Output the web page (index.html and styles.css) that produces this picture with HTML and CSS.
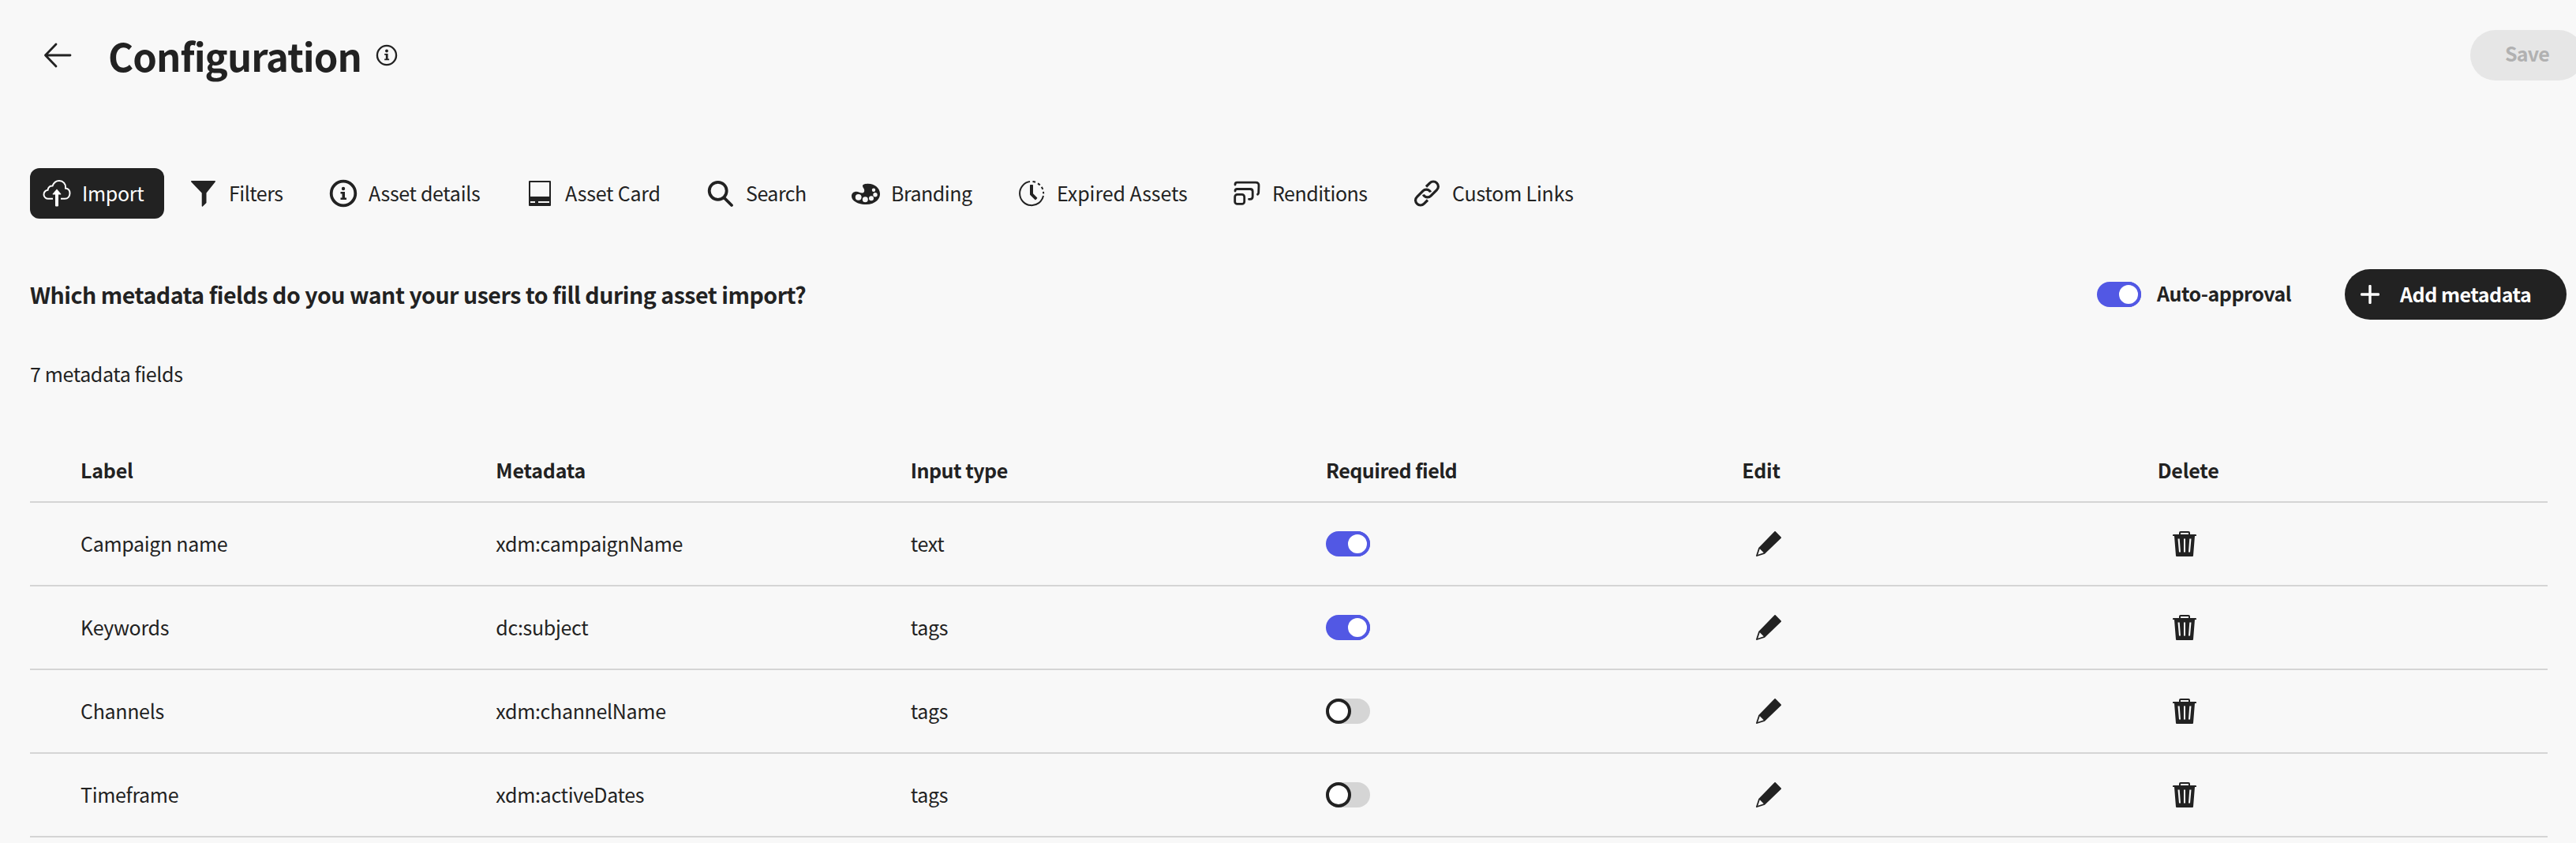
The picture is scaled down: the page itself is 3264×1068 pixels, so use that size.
FILE: index.html
```
<!DOCTYPE html>
<html lang="en">
<head>
<meta charset="utf-8">
<title>Configuration</title>
<link rel="stylesheet" href="styles.css">
</head>
<body>
<svg class="defs" width="0" height="0">
  <symbol id="pencil" viewBox="0 0 36 36">
    <path fill-rule="evenodd" d="M26.700 2.200 33.800 9.500c.4.400.4.900 0 1.300L13 30.800 2.800 33.900c-.5.100-.9-.3-.8-.8L5.300 23 25.500 2.200c.3-.4.900-.4 1.200 0zM6.800 24.300 4.300 31.700l7.500-2.400z"/>
  </symbol>
  <symbol id="trash" viewBox="0 0 36 36">
    <path fill-rule="evenodd" d="M11 6V4a2 2 0 0 1 2-2h10a2 2 0 0 1 2 2v2h7a1 1 0 0 1 1 1v1h-2l-2 25a1 1 0 0 1-1 1H8a1 1 0 0 1-1-1L5 8H3V7a1 1 0 0 1 1-1zm2 0h10V4H13zM9.500 11.500 11 28.500h2l-1.300-17zM17 11.500v17h2v-17zm7.300 0L23 28.500h2l1.500-17z"/>
  </symbol>
</svg>
<main class="page">
  <header class="topbar">
    <svg class="back" viewBox="0 0 36 36"><path d="M34 18H2.500M16 4 2.500 18 16 32"/></svg>
    <h1 class="title">Configuration</h1>
    <svg class="hint" viewBox="0 0 36 36"><circle class="ring" cx="18" cy="18" r="15.500"/><circle cx="18" cy="11" r="2.500"/><path d="M14.300 15.500H20v8.200h2v2.300h-7.700v-2.300h2.200v-5.900h-2.200z"/></svg>
    <button class="btn btn-save" disabled>Save</button>
  </header>

  <nav class="tabs">
    <a class="tab active"><svg viewBox="0 0 36 36"><path class="line" d="M13 24.800H7.500a5.500 5.500 0 0 1-1-11c.3-3.500 3-5.600 6-5.300C14 4.800 17 2 21 2c5 0 8.500 4 8 8.500v1c3.500.4 5.500 3 5.500 6.300 0 4-2.500 7-6.500 7h-5"/><path class="fill" d="M18 12.500l5.200 6c.4.500.1 1-.5 1H20v14a1 1 0 0 1-1 1h-2a1 1 0 0 1-1-1v-14h-2.700c-.6 0-.9-.5-.5-1z"/></svg><span>Import</span></a>
    <a class="tab tight"><svg viewBox="0 0 36 36"><path class="fill" d="M3 2h29c1 0 1.300.8.700 1.500L21.500 17.500V30l-4.600 4.500c-.4.400-1.200.1-1.200-.6V17.500L2.300 3.500C1.700 2.800 2 2 3 2z"/></svg><span>Filters</span></a>
    <a class="tab"><svg viewBox="0 0 36 36"><circle class="bold" cx="18" cy="18" r="15.300"/><circle class="fill" cx="18" cy="12" r="2.200"/><path class="fill" d="M14.500 16H20v7.500h2V26h-7.500v-2.500h2v-5h-2z"/></svg><span>Asset details</span></a>
    <a class="tab loose"><svg viewBox="0 0 36 36"><path class="fill" fill-rule="evenodd" d="M5 2h26a1 1 0 0 1 1 1v30a1 1 0 0 1-1 1H5a1 1 0 0 1-1-1V3a1 1 0 0 1 1-1zm1 2v18h24V4zm0 24v2h6v-2zm10 0v2h14v-2z"/></svg><span>Asset Card</span></a>
    <a class="tab tight"><svg viewBox="0 0 36 36"><circle class="bold" cx="14.700" cy="14.800" r="11"/><path class="bold round" d="m23 24 9 9"/></svg><span>Search</span></a>
    <a class="tab tight"><svg viewBox="0 0 36 36"><path class="fill" fill-rule="evenodd" d="M14 8.500c0-2 3-2.800 7-2.800 8.500 0 15 5.800 15 12.800C36 26.500 28.500 32 18.500 32 8 32 0 27.500 0 21.500c0-3.700 2.800-5.800 6-5.800 3 0 4.800 1.800 7.500 1.800 2 0 2.700-1.500 2.700-3.500S14 10.500 14 8.500zM8.700 18.900a3.900 3.900 0 1 0 .01 7.800 3.900 3.900 0 0 0-.01-7.800zM17.300 22.300a3.500 3.500 0 1 0 .01 7 3.500 3.500 0 0 0-.01-7zM25 21.200a3 3 0 1 0 .01 6 3 3 0 0 0-.01-6zM30 17a2.700 2.700 0 1 0 .01 5.400A2.700 2.700 0 0 0 30 17zM28 11.500a2.200 2.200 0 1 0 .01 4.400 2.200 2.200 0 0 0-.01-4.400z"/></svg><span>Branding</span></a>
    <a class="tab looser"><svg viewBox="0 0 36 36"><path class="line" d="M16 3.100A15.100 15.100 0 1 0 33 21"/><path class="line" d="M19.500 3a15 15 0 0 1 3.500.8M26 5.300a15 15 0 0 1 2.700 2.200M30.700 9.900a15 15 0 0 1 1.600 3M33 15.800a15 15 0 0 1 .1 2.600"/><path class="fill" d="M16.800 7h2.400c.5 0 .8.300.8.800v10.400l5 5c.4.400.4.800 0 1.200l-1.500 1.500c-.4.400-.8.400-1.200 0l-6-6c-.2-.2-.3-.5-.3-.8V7.800c0-.5.3-.8.800-.8z"/></svg><span>Expired Assets</span></a>
    <a class="tab tight"><svg viewBox="0 0 36 36"><path class="mid" d="M3 7c0-2 1-2.800 2.500-2.800H29c3 0 4.200 1.300 4 3.800l-.3 9c0 1-.4 1.800-1.200 2.300M3 15c0-1.700 1-2.500 2.500-2.500H22c2.200 0 3.200 1 3.200 3V22c0 2.300-1 3.300-3.200 3.300h-1.500"/><rect class="mid" x="2.700" y="19.400" width="12" height="12" rx="3"/></svg><span>Renditions</span></a>
    <a class="tab loose"><svg viewBox="0 0 36 36"><path class="mid thick" d="m17 9.500 4.700-4.600a6 6 0 0 1 8.800 0 6 6 0 0 1 0 8.800l-7.500 7.500a6 6 0 0 1-8.500 0 4 4 0 0 1-.9-1.700M19 26.500l-4.700 4.600a6 6 0 0 1-8.800 0 6 6 0 0 1 0-8.800l7.500-7.500a6 6 0 0 1 8.500 0 4 4 0 0 1 .9 1.700"/></svg><span>Custom Links</span></a>
  </nav>

  <section class="toolbar">
    <h2 class="question">Which metadata fields do you want your users to fill during asset import?</h2>
    <div class="approval"><span class="switch on"></span><span class="approval-label">Auto-approval</span></div>
    <button class="btn btn-add"><svg viewBox="0 0 24 24"><path d="M12 1.500v21M1.500 12h21"/></svg><span>Add metadata</span></button>
  </section>

  <p class="count">7 metadata fields</p>

  <section class="table">
    <div class="row head"><span>Label</span><span>Metadata</span><span class="tight">Input type</span><span class="tight">Required field</span><span>Edit</span><span>Delete</span></div>
    <div class="row"><span>Campaign name</span><span>xdm:campaignName</span><span>text</span><i class="switch on"></i><svg><use href="#pencil"/></svg><svg><use href="#trash"/></svg></div>
    <div class="row"><span>Keywords</span><span>dc:subject</span><span>tags</span><i class="switch on"></i><svg><use href="#pencil"/></svg><svg><use href="#trash"/></svg></div>
    <div class="row"><span>Channels</span><span>xdm:channelName</span><span>tags</span><i class="switch"></i><svg><use href="#pencil"/></svg><svg><use href="#trash"/></svg></div>
    <div class="row"><span>Timeframe</span><span>xdm:activeDates</span><span>tags</span><i class="switch"></i><svg><use href="#pencil"/></svg><svg><use href="#trash"/></svg></div>
  </section>
</main>
</body>
</html>
```
FILE: styles.css
```
*, *::before { box-sizing: border-box; }

body {
  margin: 0;
  background: #f8f8f8;
  color: #222;
  font: 25px/32px "Noto Sans CJK SC", "Open Sans", sans-serif;
  letter-spacing: -0.32px;
  overflow: hidden;
}

h1, h2, p { margin: 0; }
.defs { display: block; }

.page {
  display: flex;
  flex-direction: column;
  width: 3274px;
  padding: 38px 0 0 38px;
}

.topbar { display: flex; align-items: center; height: 64px; }
.back {
  width: 36px;
  height: 36px;
  margin-left: 17px;
  fill: none;
  stroke: #222;
  stroke-width: 2.8;
  stroke-linecap: round;
  stroke-linejoin: round;
}
.title {
  margin-left: 46px;
  font-size: 49px;
  line-height: 64px;
  font-weight: 700;
  letter-spacing: -0.95px;
}
.hint {
  width: 28px;
  height: 28px;
  margin-left: 18px;
  fill: #222;
}
.hint .ring { fill: none; stroke: #222; stroke-width: 3; }

.btn {
  display: flex;
  align-items: center;
  height: 64px;
  border: 0;
  border-radius: 32px;
  font: inherit;
  font-weight: 700;
  white-space: nowrap;
}
.btn-save {
  width: 144px;
  margin-left: auto;
  padding: 0 0 7px 44px;
  background: #e6e6e6;
  color: #b1b1b1;
  letter-spacing: -0.8px;
}

.tabs {
  display: grid;
  grid-template-columns: 186px 177px 249px 229px 184px 210px 273px 228px 240px;
  margin-top: 111px;
}
.tab {
  display: flex;
  align-items: center;
  justify-self: start;
  gap: 14px;
  height: 64px;
  padding: 0 26px 0 16px;
  border-radius: 12px;
  white-space: nowrap;
}
.tab span { padding-bottom: 2px; }
.tab.active { width: 170px; background: #222; color: #fff; }
.tab svg {
  flex: none;
  width: 36px;
  height: 36px;
  fill: none;
  stroke: currentColor;
}
.tab svg .fill { fill: currentColor; stroke: none; }
.tab svg .line { stroke-width: 2; }
.tab svg .mid { stroke-width: 2.8; stroke-linecap: round; }
.tab svg .thick { stroke-width: 3.2; stroke-linecap: butt; }
.tab svg .bold { stroke-width: 3.8; }
.tab svg .round { stroke-linecap: round; }
.tight { letter-spacing: -0.5px; }
.loose { letter-spacing: -0.2px; }
.looser { letter-spacing: -0.08px; }

.toolbar { display: flex; align-items: center; height: 64px; margin-top: 64px; }
.question {
  font-size: 28.5px;
  line-height: 40px;
  font-weight: 700;
  letter-spacing: -0.48px;
}
.approval {
  display: flex;
  align-items: center;
  gap: 20px;
  margin-left: auto;
  font-weight: 700;
  letter-spacing: -0.48px;
}
.approval-label { width: 171px; padding-bottom: 4px; white-space: nowrap; }
.btn-add {
  width: 281px;
  margin: 0 22px 0 67px;
  padding: 0 0 0 20px;
  gap: 26px;
  background: #222;
  color: #fff;
  letter-spacing: -0.48px;
}
.btn-add span { padding-bottom: 3px; }
.btn-add svg {
  width: 24px;
  height: 24px;
  stroke: #fff;
  stroke-width: 3.4;
  stroke-linecap: round;
}

.switch {
  position: relative;
  display: block;
  width: 56px;
  height: 32px;
  border-radius: 16px;
  background: #d5d5d5;
}
.switch::before {
  content: "";
  position: absolute;
  left: 0;
  top: 0;
  width: 32px;
  height: 32px;
  border: 4px solid #222;
  border-radius: 50%;
  background: #fff;
}
.switch.on { background: #5258e4; }
.switch.on::before { left: 24px; border-color: #5258e4; }

.count { margin-top: 52px; letter-spacing: -0.38px; }

.table { width: 3190px; margin-top: 68px; }
.row {
  display: grid;
  grid-template-columns: repeat(6, 1fr);
  align-items: center;
  height: 106px;
  padding-left: 32px;
  border-bottom: 2px solid #d5d5d5;
}
.row > * { margin-left: 32px; }
.row > :nth-child(3), .row > :nth-child(4) { margin-left: 31px; }
.row > span { padding-bottom: 2px; }
.row > svg { width: 36px; height: 36px; margin-left: 48px; fill: #222; }
.head { height: 80px; font-weight: 700; letter-spacing: -0.2px; }
```
